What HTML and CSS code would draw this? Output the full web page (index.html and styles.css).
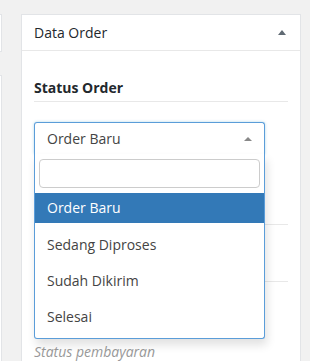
FILE: index.html
```html
<!DOCTYPE html>
<html>
<head>
<title>Data Order</title>
<meta charset="utf-8">
<link rel="stylesheet" href="styles.css">
</head>
<body>
  <div id="wrap">
    <div id="side">
      <div class="sideBox" id="sideTop"></div>
      <div class="sideBox" id="sideBottom"></div>
    </div>

    <div class="postbox">
      <div class="hndle">
        <span>Data Order</span>
        <span class="toggle"></span>
      </div>
      <div class="inside">
        <div class="fieldTitle">Status Order</div>

        <div class="selectWrap">
          <div class="selection">
            <span>Order Baru</span>
            <b class="arrow"></b>
          </div>
          <div class="dropdown">
            <div class="search"><input type="text"></div>
            <ul class="results">
              <li class="hl">Order Baru</li>
              <li>Sedang Diproses</li>
              <li>Sudah Dikirim</li>
              <li>Selesai</li>
            </ul>
          </div>
        </div>

        <div class="row" id="rowPay"></div>
        <div class="row" id="rowShip"></div>
        <p class="desc">Status pembayaran</p>
      </div>
    </div>
  </div>
</body>
</html>
```

FILE: styles.css
```css
body {margin: 0; background-color: #f1f1f1;
      font-family: "Open Sans", "Noto Sans", sans-serif; font-size: 14px; color: #444;
      overflow: hidden;
}
#wrap {display: flex; align-items: flex-start;}

#side {width: 2px; margin-right: 19px;}
.sideBox {background-color: #fff; border: 1px solid #e2e4e7; border-left: 0px;}
#sideTop {height: 36px; margin-top: 14px;}
#sideBottom {height: 300px; margin-top: 23px;}

.postbox {width: 278px; margin-top: 14px; height: 400px;
          background-color: #fff; border: 1px solid #e2e4e7;
}
.hndle {height: 35px; padding: 0 14px 0 12px;
        display: flex; align-items: center; justify-content: space-between;
        border-bottom: 1px solid #e8e8e8;
        font-size: 14px; color: #23282d;
}
.toggle {width: 0; height: 0;
         border-left: 4px solid transparent; border-right: 4px solid transparent;
         border-bottom: 5px solid #606a73;
}
.inside {padding: 0 12px;}

.fieldTitle {margin-top: 27px; line-height: 20px; padding-bottom: 3px;
             font-weight: bold; color: #23282d;
             border-bottom: 1px solid #e8e8e8;
}

.selectWrap {position: relative; width: 231px; margin-top: 20px;}
.selection {height: 31px; padding: 0 12px;
            display: flex; align-items: center; justify-content: space-between;
            border: 1px solid #5b9dd9; border-bottom: 0px; border-radius: 3px 3px 0 0;
            box-shadow: 0 0 3px rgba(30,140,190,0.35);
            color: #444;
}
.arrow {width: 0; height: 0;
        border-left: 4px solid transparent; border-right: 4px solid transparent;
        border-bottom: 4px solid #888;
}
.dropdown {position: absolute; left: 0; top: 32px; width: 229px; z-index: 1;
           background-color: #fff;
           border: 1px solid #5b9dd9; border-top: 0px; border-radius: 0 0 3px 3px;
           box-shadow: 2px 6px 10px rgba(0,0,0,0.12);
}
.search {padding: 5px 4px;}
.search input {display: block; box-sizing: border-box; width: 100%; height: 29px;
               border: 1px solid #ccc; border-radius: 4px; margin: 0;
}
.results {list-style: none; margin: 0; padding: 0 0 3px 0;}
.results li {height: 36px; line-height: 36px; padding-left: 12px; color: #444;}
.results li.hl {height: 30px; line-height: 30px; margin-bottom: 4px;
                background-color: #3379b7; color: #fff;
}

.row {border-bottom: 1px solid #e8e8e8;}
#rowPay {margin-top: 70px;}
#rowShip {margin-top: 56px;}
.desc {margin: 60px 0 0 0; line-height: 20px; font-size: 14px; font-style: italic; color: #999;}
```
